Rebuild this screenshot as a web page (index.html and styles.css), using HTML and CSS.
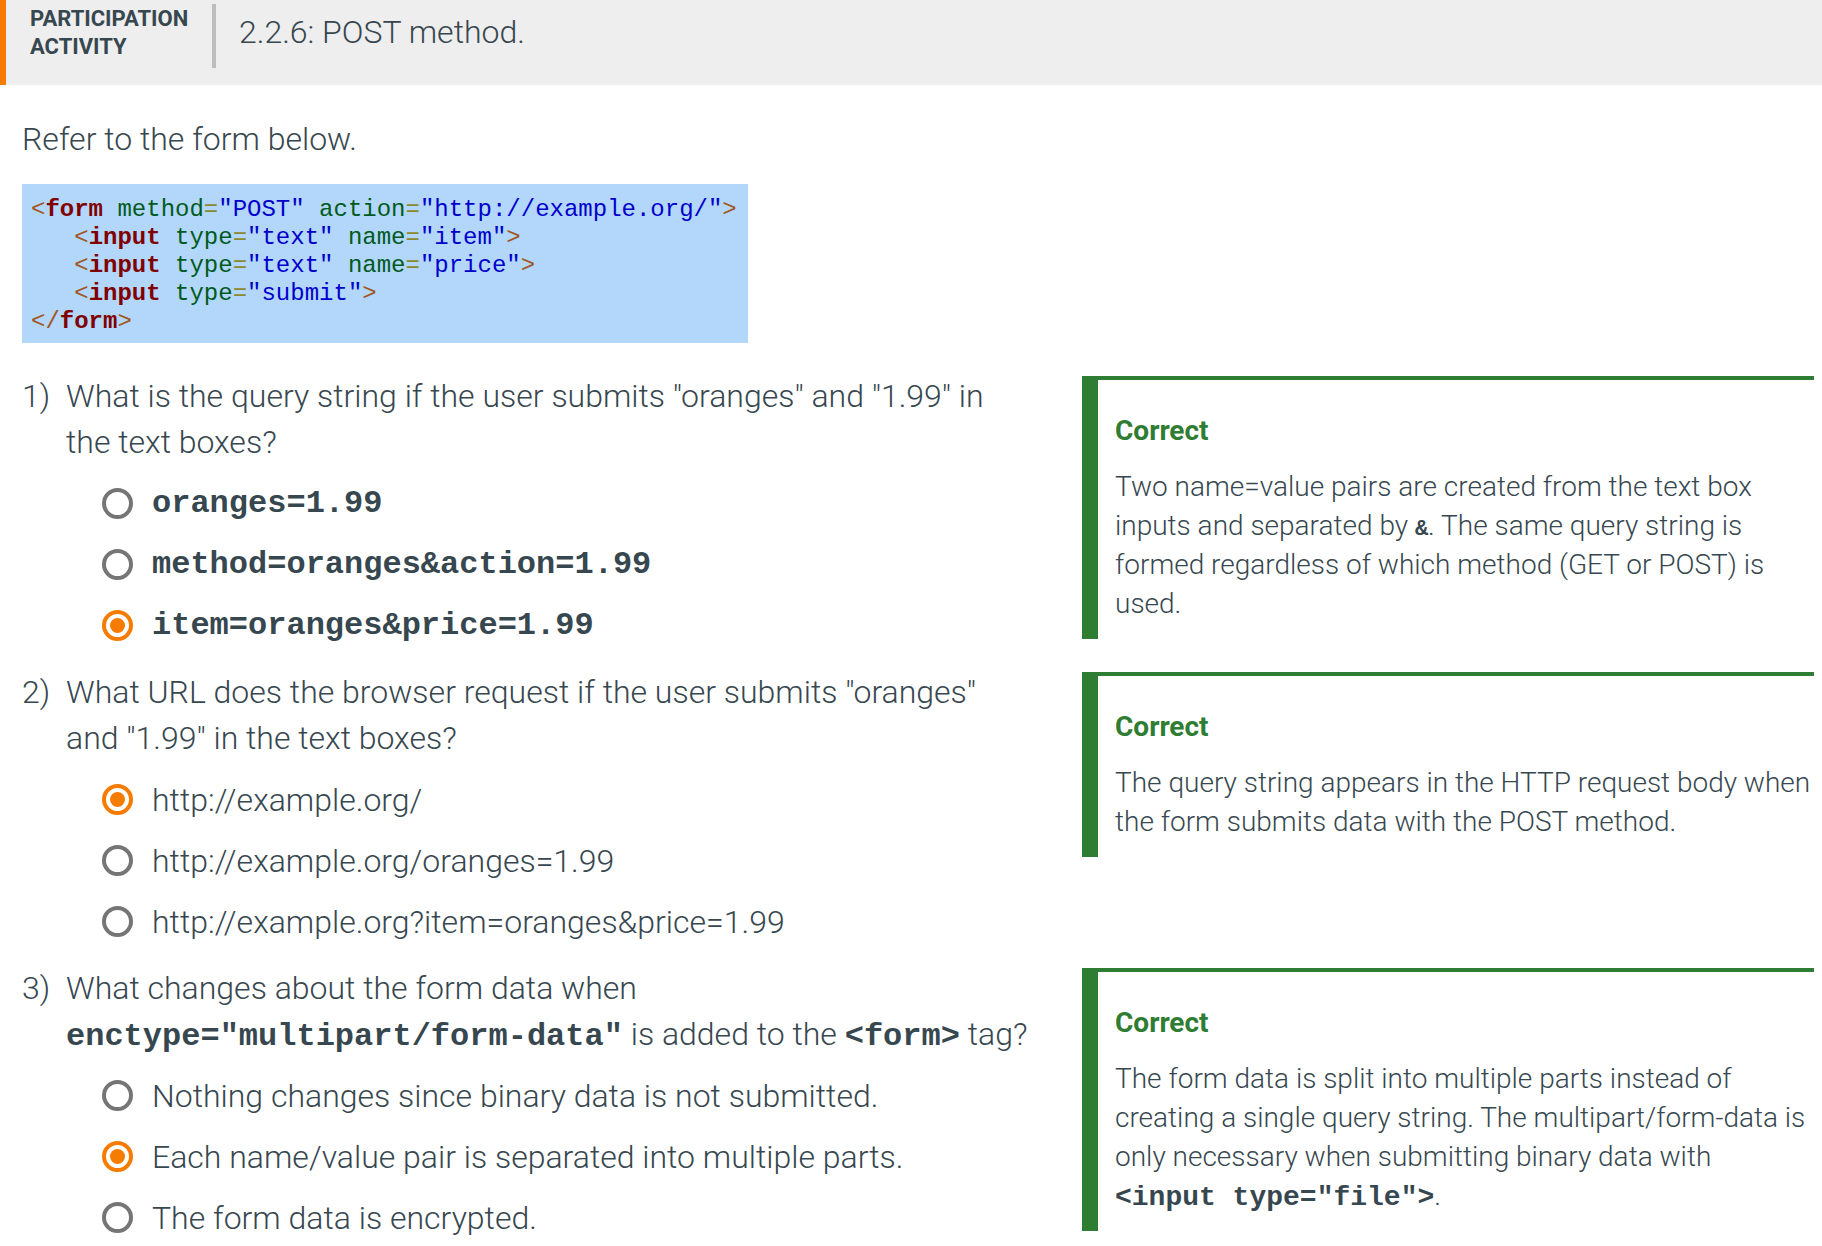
FILE: index.html
```html
<!DOCTYPE html>
<html lang="en">
<head>
<meta charset="utf-8">
<title>2.2.6: POST method.</title>
<link rel="stylesheet" href="styles.css">
</head>
<body>
<header class="activity-header">
  <div class="activity-label">PARTICIPATION<br>ACTIVITY</div>
  <div class="activity-divider"></div>
  <h1 class="activity-title">2.2.6: POST method.</h1>
</header>
<main class="content">
  <p class="intro">Refer to the form below.</p>
<pre class="code"><span class="p">&lt;</span><span class="t">form</span> <span class="a">method</span><span class="e">=</span><span class="v">"POST"</span> <span class="a">action</span><span class="e">=</span><span class="v">"http://example.org/"</span><span class="p">&gt;</span>
   <span class="p">&lt;</span><span class="t">input</span> <span class="a">type</span><span class="e">=</span><span class="v">"text"</span> <span class="a">name</span><span class="e">=</span><span class="v">"item"</span><span class="p">&gt;</span>
   <span class="p">&lt;</span><span class="t">input</span> <span class="a">type</span><span class="e">=</span><span class="v">"text"</span> <span class="a">name</span><span class="e">=</span><span class="v">"price"</span><span class="p">&gt;</span>
   <span class="p">&lt;</span><span class="t">input</span> <span class="a">type</span><span class="e">=</span><span class="v">"submit"</span><span class="p">&gt;</span>
<span class="p">&lt;/</span><span class="t">form</span><span class="p">&gt;</span></pre>

  <div class="qa">
    <div class="question">
      <div class="prompt"><span class="num">1)</span><span class="q-text">What is the query string if the user submits "oranges" and "1.99" in<br>the text boxes?</span></div>
      <div class="options">
        <div class="option"><span class="radio"></span><span class="mono">oranges=1.99</span></div>
        <div class="option"><span class="radio"></span><span class="mono">method=oranges&amp;action=1.99</span></div>
        <div class="option"><span class="radio checked"></span><span class="mono">item=oranges&amp;price=1.99</span></div>
      </div>
    </div>
    <div class="feedback">
      <div class="fb-title">Correct</div>
      <div class="fb-text">Two name=value pairs are created from the text box<br>inputs and separated by <span class="amp">&amp;</span>. The same query string is<br>formed regardless of which method (GET or POST) is<br>used.</div>
    </div>

    <div class="question">
      <div class="prompt"><span class="num">2)</span><span class="q-text">What URL does the browser request if the user submits "oranges"<br>and "1.99" in the text boxes?</span></div>
      <div class="options">
        <div class="option"><span class="radio checked"></span><span>http://example.org/</span></div>
        <div class="option"><span class="radio"></span><span>http://example.org/oranges=1.99</span></div>
        <div class="option"><span class="radio"></span><span>http://example.org?item=oranges&amp;price=1.99</span></div>
      </div>
    </div>
    <div class="feedback">
      <div class="fb-title">Correct</div>
      <div class="fb-text">The query string appears in the HTTP request body when<br>the form submits data with the POST method.</div>
    </div>

    <div class="question">
      <div class="prompt"><span class="num">3)</span><span class="q-text">What changes about the form data when<br><span class="mono">enctype="multipart/form-data"</span> is added to the <span class="mono">&lt;form&gt;</span> tag?</span></div>
      <div class="options">
        <div class="option"><span class="radio"></span><span>Nothing changes since binary data is not submitted.</span></div>
        <div class="option"><span class="radio checked"></span><span>Each name/value pair is separated into multiple parts.</span></div>
        <div class="option"><span class="radio"></span><span>The form data is encrypted.</span></div>
      </div>
    </div>
    <div class="feedback">
      <div class="fb-title">Correct</div>
      <div class="fb-text">The form data is split into multiple parts instead of<br>creating a single query string. The multipart/form-data is<br>only necessary when submitting binary data with<br><span class="fb-mono">&lt;input type="file"&gt;</span>.</div>
    </div>
  </div>
</main>
</body>
</html>
```

FILE: styles.css
```css
html, body {
  margin: 0;
  padding: 0;
  background: #ffffff;
}

body {
  font-family: Roboto, "Noto Sans", "Liberation Sans", sans-serif;
  color: #37474f;
}

.activity-header {
  display: flex;
  align-items: flex-start;
  height: 85px;
  background: #eeeeee;
  border-left: 6px solid #f57c00;
  box-sizing: border-box;
}

.activity-label {
  width: 182px;
  box-sizing: border-box;
  padding: 5px 0 0 24px;
  font-size: 22px;
  line-height: 28px;
  font-weight: 700;
  color: #37474f;
}

.activity-divider {
  width: 4px;
  height: 64px;
  margin: 4px 0 0 24px;
  background: #bdbdbd;
}

.activity-title {
  margin: 14px 0 0 23px;
  font-size: 32px;
  line-height: 36px;
  font-weight: 300;
  color: #37474f;
}

.content {
  padding: 0 8px 0 22px;
}

.intro {
  margin: 32px 0 0;
  font-size: 32px;
  line-height: 45px;
  font-weight: 300;
}

.code {
  margin: 22px 0 0;
  width: fit-content;
  background: #b3d7fa;
  padding: 12px 11px 7px 9px;
  font-family: "Liberation Mono", "DejaVu Sans Mono", monospace;
  font-size: 24px;
  line-height: 28px;
  white-space: pre;
  color: #000;
}

.code .p { color: #a0561e; }
.code .t { color: #800000; font-weight: bold; }
.code .a { color: #005a1e; }
.code .e { color: #8a8a2a; }
.code .v { color: #0000cc; }

.qa {
  margin-top: 30px;
  display: grid;
  grid-template-columns: 1038px 732px;
  column-gap: 22px;
  row-gap: 13px;
}

.prompt {
  display: flex;
  font-size: 32px;
  line-height: 46px;
  font-weight: 300;
  white-space: nowrap;
}

.num {
  flex: none;
  width: 44px;
}

.mono {
  font-family: "Liberation Mono", "DejaVu Sans Mono", monospace;
  font-size: 32px;
  font-weight: bold;
}

.prompt .mono {
  line-height: 1;
}

.options {
  margin-top: 8px;
  padding-left: 80px;
}

.option {
  display: flex;
  align-items: center;
  gap: 19px;
  height: 61px;
  font-size: 32px;
  font-weight: 300;
  white-space: nowrap;
}

.radio {
  position: relative;
  flex: none;
  width: 31px;
  height: 31px;
  box-sizing: border-box;
  border: 4px solid #757575;
  border-radius: 50%;
  background: #fff;
}

.radio.checked {
  border-color: #f57c00;
}

.radio.checked::after {
  content: "";
  position: absolute;
  left: 4px;
  top: 4px;
  width: 15px;
  height: 15px;
  border-radius: 50%;
  background: #f57c00;
}

.feedback {
  align-self: start;
  margin-top: 3px;
  border-top: 4px solid #2e7d32;
  border-left: 16px solid #2e7d32;
  padding: 31px 0 16px 17px;
}

.fb-title {
  font-size: 28px;
  line-height: 39px;
  font-weight: 700;
  color: #2e7d32;
  margin-bottom: 17px;
}

.fb-text {
  font-size: 28px;
  line-height: 39px;
  font-weight: 300;
  white-space: nowrap;
}

.amp {
  font-family: "Liberation Mono", "DejaVu Sans Mono", monospace;
  font-weight: bold;
  font-size: 22px;
  line-height: 1;
}

.fb-mono {
  font-family: "Liberation Mono", "DejaVu Sans Mono", monospace;
  font-size: 28px;
  font-weight: bold;
  line-height: 1;
}
```
